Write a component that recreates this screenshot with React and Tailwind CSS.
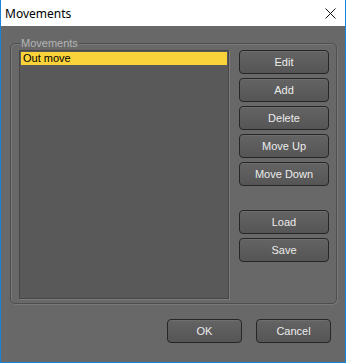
import React from "react";

const btn =
  "flex items-center justify-center rounded-[4px] border border-[#262626] bg-gradient-to-b from-[#646464] to-[#555555] text-[11px] text-[#ececec] shadow-[inset_0_1px_0_#6e6e6e]";

export default function App() {
  const side = [
    { label: "Edit" },
    { label: "Add" },
    { label: "Delete" },
    { label: "Move Up" },
    { label: "Move Down" },
  ];
  return (
    <div
      className="w-[346px] h-[363px] flex flex-col border-l border-r border-b border-[#1883d7] bg-[#686868] overflow-hidden"
      style={{ fontFamily: '"Liberation Sans", Arial, sans-serif' }}
    >
      <div className="h-[26px] bg-white flex items-center justify-between pl-[4px] pr-[9px] shrink-0">
        <span
          className="text-[12px] text-black leading-none pt-[1px]"
          style={{ fontFamily: '"Noto Sans", "Open Sans", sans-serif' }}
        >
          Movements
        </span>
        <svg width="11" height="11" viewBox="0 0 11 11" className="mt-[1px]">
          <path d="M0.5 0.5 L10.5 10.5 M10.5 0.5 L0.5 10.5" stroke="#111" strokeWidth="1" />
        </svg>
      </div>
      <div className="flex-1 flex flex-col pl-[9px] pr-[7px] pt-[17px]">
        <div className="relative w-[327px] h-[261px] rounded-[5px] border border-[#4e4e4e] shadow-[1px_1px_0_#787878,inset_1px_1px_0_#787878] flex pl-[8px] pt-[6px] pb-[5px] pr-[7px]">
          <span className="absolute left-[9px] top-[-8px] px-[1px] bg-[#686868] text-[11px] leading-[14px] text-[#b4b4b4]">
            Movements
          </span>
          <div className="w-[210px] h-[249px] border border-[#474747] shadow-[1px_1px_0_#7c7c7c] bg-[#595959] p-[1px]">
            <div className="h-[13px] bg-[#fad33a] text-[11px] leading-[13px] text-black pl-[2px]">
              Out move
            </div>
          </div>
          <div className="ml-[10px] flex flex-col gap-[4px]">
            {side.map((b) => (
              <div key={b.label} className={`w-[90px] h-[24px] ${btn}`}>
                {b.label}
              </div>
            ))}
            <div className="h-[16px]" />
            <div className={`w-[90px] h-[24px] ${btn}`}>Load</div>
            <div className={`w-[90px] h-[24px] ${btn}`}>Save</div>
          </div>
        </div>
        <div className="flex justify-end gap-[14px] mt-[15px] pr-[7px]">
          <div className={`w-[75px] h-[24px] ${btn}`}>OK</div>
          <div className={`w-[75px] h-[24px] ${btn}`}>Cancel</div>
        </div>
      </div>
    </div>
  );
}
